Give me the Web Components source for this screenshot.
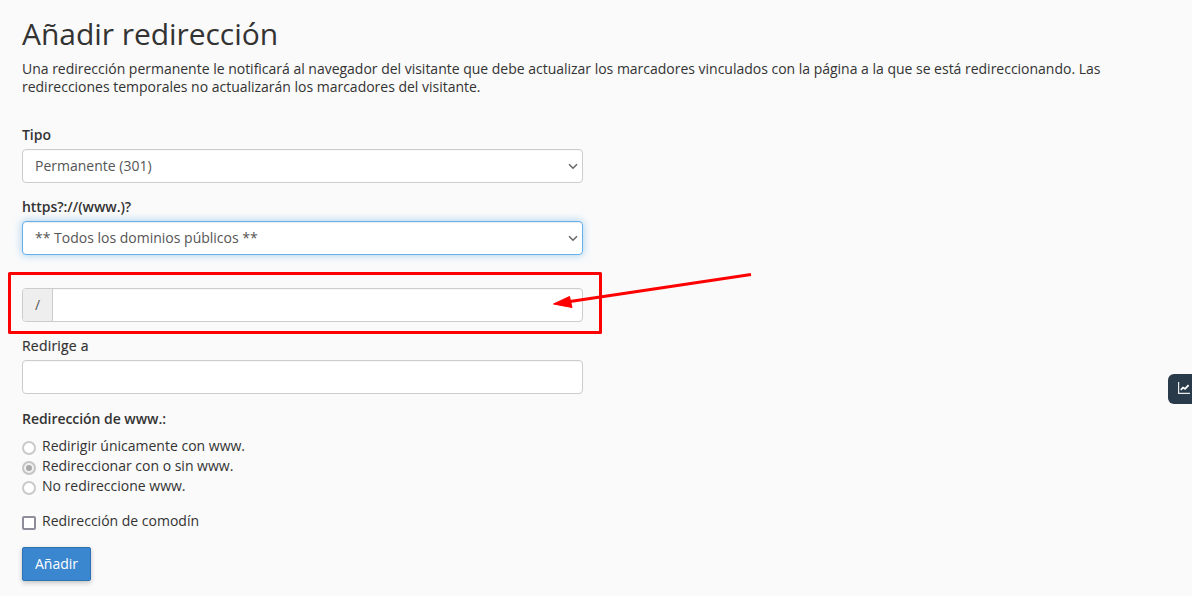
<!DOCTYPE html>
<html lang="es"><head><meta charset="utf-8"><title>Añadir redirección</title>
<style>
html,body{margin:0;height:596px;overflow:hidden;background:#fafafa}
body{font:14px/20px "Open Sans",sans-serif;color:#333}
</style></head><body>
<redirect-page></redirect-page>
<script>
const base=`*{box-sizing:border-box}`;
customElements.define('form-field',class extends HTMLElement{constructor(){super();this.attachShadow({mode:'open'}).innerHTML=`<style>${base}
:host{display:block;width:561px}
label{display:block;font-weight:600;height:20px;margin-bottom:4px;line-height:20px;letter-spacing:-.05px}
:host([plain]) label{font-weight:500;letter-spacing:.2px;-webkit-text-stroke:.2px #333}
</style><label><slot name="label"></slot></label><slot></slot>`}});
customElements.define('select-box',class extends HTMLElement{constructor(){super();this.attachShadow({mode:'open'}).innerHTML=`<style>${base}
:host{display:flex;align-items:center;height:34px;padding:0 2px 0 12px;background:#fff;border:1px solid #ccc;border-radius:4px;color:#555;box-shadow:inset 0 1px 1px rgba(0,0,0,.03)}
:host([focus]){border-color:#66afe9;box-shadow:inset 0 1px 1px rgba(0,0,0,.075),0 0 8px rgba(102,175,233,.6)}
span{flex:1}
svg{width:10px;height:7px;margin-right:2px}
</style><span><slot></slot></span><svg viewBox="0 0 10 7"><path d="M1 1.2 5 5.2 9 1.2" fill="none" stroke="#666" stroke-width="1.5"/></svg>`}});
customElements.define('text-box',class extends HTMLElement{constructor(){super();this.attachShadow({mode:'open'}).innerHTML=`<style>${base}
:host{display:flex;height:34px;background:#fff;border:1px solid #ccc;border-radius:4px;overflow:hidden;box-shadow:inset 0 1px 1px rgba(0,0,0,.03)}
::slotted(*){width:30px;background:#eee;border-right:1px solid #ccc;color:#555;text-align:center;line-height:32px}
</style><slot></slot>`}});
customElements.define('radio-row',class extends HTMLElement{constructor(){super();this.attachShadow({mode:'open'}).innerHTML=`<style>${base}
:host{display:flex;height:20px;align-items:center;gap:6px;font-weight:400}
i{width:14px;height:14px;border-radius:50%;border:2px solid #c9c9c9;background:#fff;flex:none;margin-top:3px;display:flex;align-items:center;justify-content:center}
:host([checked]) i::after{content:"";width:6px;height:6px;border-radius:50%;background:#a9a9a9}
:host([checked]) i{border-color:#c4c4c4;background:#f0f0f0}
</style><i></i><slot></slot>`}});
customElements.define('check-row',class extends HTMLElement{constructor(){super();this.attachShadow({mode:'open'}).innerHTML=`<style>${base}
:host{display:flex;height:20px;align-items:center;gap:6px}
i{width:14px;height:14px;border-radius:2px;border:2px solid #8f8c9c;background:#fff;flex:none;margin-top:3px}
</style><i></i><slot></slot>`}});
customElements.define('primary-button',class extends HTMLElement{constructor(){super();this.attachShadow({mode:'open'}).innerHTML=`<style>${base}
:host{display:inline-block;height:34px;padding:0 12px;line-height:32px;color:#fff;background:#3a87d0;border:1px solid #2f72b4;border-radius:2px;box-shadow:0 2px 5px rgba(0,0,0,.22)}
</style><slot></slot>`}});
customElements.define('stats-tab',class extends HTMLElement{constructor(){super();this.attachShadow({mode:'open'}).innerHTML=`<style>${base}
:host{position:absolute;left:1168px;top:374px;width:24px;height:30px;background:#293a4a;border-radius:6px 0 0 6px;display:flex;align-items:center;padding-left:10px}
svg{width:12px;height:12px;flex:none;margin-bottom:2px}
</style><svg viewBox="0 0 12 12" fill="none" stroke="#fff"><path d="M.6 0V11.4H12" stroke-width="1.2" stroke-opacity=".9"/><path d="M2.8 7.8 5 5.6 7 6.8 10.6 3.2" stroke-width="1.8"/></svg>`}});
customElements.define('red-callout',class extends HTMLElement{constructor(){super();this.attachShadow({mode:'open'}).innerHTML=`<style>
:host{position:absolute;left:0;top:0;display:block;pointer-events:none}
svg{position:absolute;left:0;top:0;width:1192px;height:596px}
</style><svg viewBox="0 0 1192 596" fill="none"><rect x="9.5" y="273.5" width="591" height="59" stroke="#f00" stroke-width="3" stroke-linejoin="round"/><path d="M751 274.5 570 301.5" stroke="#f00" stroke-width="3"/><path d="M553.5 304 569.5 296.5 572 307.5Z" fill="#f00" stroke="#f00" stroke-width="1"/></svg>`}});
customElements.define('redirect-page',class extends HTMLElement{constructor(){super();this.attachShadow({mode:'open'}).innerHTML=`<style>${base}
:host{display:block;padding:14px 22px 0;font-family:"Open Sans",sans-serif;color:#333}
h1{font-size:30px;font-weight:400;line-height:40px;margin:0;letter-spacing:-.05px}
p{margin:6px 0 0;width:1100px;line-height:18px;letter-spacing:-.012px}
.f1{margin-top:29px}.f2{margin-top:14px}.g{margin-top:33px;width:561px}.f3{margin-top:14px}
.f4{margin-top:15px}.l{font-weight:600;height:20px;margin-bottom:7px;letter-spacing:-.05px}
.c{margin-top:15px}.b{margin-top:16px}
</style>
<h1>Añadir redirección</h1>
<p>Una redirección permanente le notificará al navegador del visitante que debe actualizar los marcadores vinculados con la página a la que se está redireccionando. Las redirecciones temporales no actualizarán los marcadores del visitante.</p>
<form-field class="f1"><span slot="label">Tipo</span><select-box>Permanente (301)</select-box></form-field>
<form-field class="f2"><span slot="label">https?://(www.)?</span><select-box focus>** Todos los dominios públicos **</select-box></form-field>
<text-box class="g"><span>/</span></text-box>
<form-field class="f3" plain><span slot="label">Redirige a</span><text-box></text-box></form-field>
<div class="f4"><div class="l">Redirección de www.:</div>
<radio-row>Redirigir únicamente con www.</radio-row><radio-row checked>Redireccionar con o sin www.</radio-row><radio-row>No redireccione www.</radio-row></div>
<check-row class="c">Redirección de comodín</check-row>
<div class="b"><primary-button>Añadir</primary-button></div>
<stats-tab></stats-tab><red-callout></red-callout>`}});
</script></body></html>
